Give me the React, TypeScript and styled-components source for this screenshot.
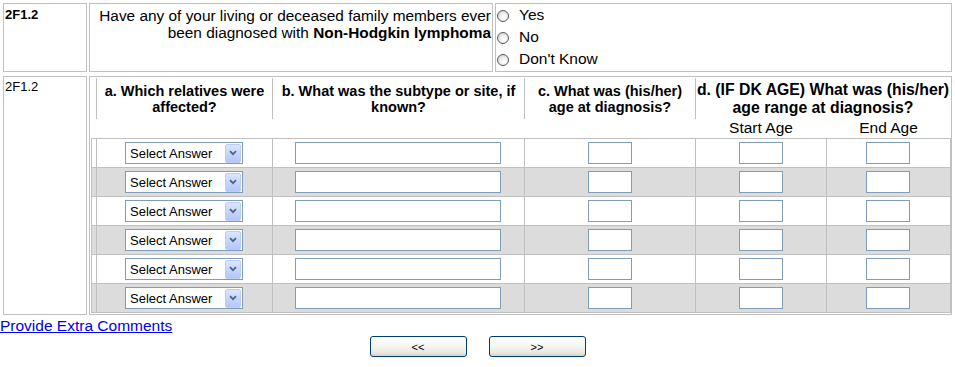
import React from 'react';
import styled, { createGlobalStyle } from 'styled-components';

const GlobalStyle = createGlobalStyle`
  html, body { margin: 0; padding: 0; background: #fff; }
  body { font-family: "Liberation Sans", Arial, sans-serif; color: #000; }
  * { box-sizing: border-box; }
`;

const Page = styled.div`
  width: 955px;
`;

const Row = styled.div<{ $pt: number }>`
  display: grid;
  grid-template-columns: 84px 404px 1fr;
  gap: 2px;
  padding: ${(p) => p.$pt}px 3px 2px;
`;

const Cell = styled.div`
  border: 1px solid #c0c0c0;
  background: #fff;
`;

const IdCell = styled(Cell)<{ $bold?: boolean; $pt: number }>`
  font-size: 13px;
  line-height: 15px;
  font-weight: ${(p) => (p.$bold ? 700 : 400)};
  padding: ${(p) => p.$pt}px 1px 0;
`;

const QuestionCell = styled(Cell)`
  font-size: 15.4px;
  line-height: 17px;
  text-align: right;
  padding: 3px 1px 0 0;
  white-space: nowrap;
`;

const OptionsCell = styled(Cell)`
  display: flex;
  flex-direction: column;
  padding: 0 0 1px 0;
`;

const Option = styled.label`
  display: flex;
  align-items: center;
  height: 22px;
  font-size: 15.5px;
`;

const RadioDot = styled.span`
  width: 12px;
  height: 12px;
  border-radius: 50%;
  border: 1px solid #5a5a5a;
  background: radial-gradient(circle at 60% 65%, #ffffff 0%, #f0f0f0 40%, #c8c8c8 100%);
  margin: 1px 10px 0 1px;
  flex: none;
`;

const TableCell = styled(Cell)`
  grid-column: 2 / span 2;
  padding: 1px 0 1px 1px;
`;

const COLS = '4px 176px 252px 171px 131px 1fr';

const HeaderGrid = styled.div`
  display: grid;
  grid-template-columns: ${COLS};
  grid-template-rows: 41px 19px;
  border-left: 1px solid transparent;
  border-right: 1px solid transparent;
`;

const HeadCell = styled.div<{ $big?: boolean; $span?: number }>`
  grid-column: span ${(p) => p.$span ?? 1};
  border-left: 1px solid #c0c0c0;
  display: flex;
  align-items: center;
  justify-content: center;
  text-align: center;
  font-weight: 700;
  white-space: nowrap;
  font-size: ${(p) => (p.$big ? '15.8px' : '14.5px')};
  line-height: ${(p) => (p.$big ? '18px' : '16px')};
`;

const Blank = styled.div<{ $span?: number }>`
  grid-column: span ${(p) => p.$span ?? 1};
`;

const SubHead = styled.div`
  display: flex;
  justify-content: center;
  font-size: 15.5px;
  line-height: 18px;
  padding-left: 1px;
`;

const DataTable = styled.div`
  border-left: 1px solid #c0c0c0;
  border-right: 1px solid #c0c0c0;
  border-bottom: 1px solid #c0c0c0;
`;

const DataRow = styled.div<{ $alt: boolean }>`
  display: grid;
  grid-template-columns: ${COLS};
  height: 29px;
  border-top: 1px solid #c0c0c0;
  background: ${(p) => (p.$alt ? '#dcdcdc' : '#ffffff')};
`;

const DataCell = styled.div`
  border-left: 1px solid #c0c0c0;
  display: flex;
  align-items: center;
  justify-content: center;
  padding-right: 1px;
`;

const TextBox = styled.input<{ $w: number }>`
  width: ${(p) => p.$w}px;
  height: 22px;
  border: 1px solid #7f9db9;
  background: #fff;
  padding: 0 2px;
  margin: 0;
  font: 13px "Liberation Sans", Arial, sans-serif;
  outline: none;
`;

const SelectBox = styled.div`
  width: 118px;
  height: 22px;
  border: 1px solid #7f9db9;
  background: #fff;
  display: flex;
  align-items: center;
  justify-content: space-between;
  padding: 0 1px 0 4px;
  font-size: 13px;
  white-space: nowrap;
`;

const SelectArrow = styled.span`
  width: 16px;
  height: 19px;
  border: 1px solid #bccdf3;
  border-radius: 2px;
  background: linear-gradient(180deg, #dbe6fd 0%, #c6d6fb 50%, #b3c7f6 100%);
  display: flex;
  align-items: center;
  justify-content: center;
`;

const LinkLine = styled.div`
  font-size: 15.5px;
  line-height: 18px;
  padding-left: 0;
  a { color: #0000ee; text-decoration: underline; }
`;

const ButtonBar = styled.div`
  display: flex;
  justify-content: center;
  gap: 22px;
  margin-top: 1px;
`;

const NavButton = styled.button`
  width: 97px;
  height: 21px;
  border: 1px solid #003c74;
  border-radius: 3px;
  background: linear-gradient(180deg, #ffffff 0%, #f6f6f3 45%, #ebe9e2 80%, #d8d3c8 100%);
  font: 11px "Liberation Sans", Arial, sans-serif;
  color: #000;
  padding: 0;
  margin: 0;
`;

const Chevron = () => (
  <svg width="8" height="6" viewBox="0 0 8 6">
    <polyline points="1,1.2 4,4.2 7,1.2" fill="none" stroke="#4d6185" strokeWidth="1.7" />
  </svg>
);

const options = ['Yes', 'No', "Don't Know"];

export default function App() {
  return (
    <Page>
      <GlobalStyle />
      <Row $pt={3}>
        <IdCell $bold $pt={3}>2F1.2</IdCell>
        <QuestionCell>
          Have any of your living or deceased family members ever
          <br />
          been diagnosed with <b>Non-Hodgkin lymphoma</b>
        </QuestionCell>
        <OptionsCell>
          {options.map((o) => (
            <Option key={o}>
              <RadioDot />
              <span>{o}</span>
            </Option>
          ))}
        </OptionsCell>
      </Row>
      <Row $pt={2}>
        <IdCell $pt={2}>2F1.2</IdCell>
        <TableCell>
          <HeaderGrid>
            <Blank />
            <HeadCell>
              a. Which relatives were
              <br />
              affected?
            </HeadCell>
            <HeadCell>
              b. What was the subtype or site, if
              <br />
              known?
            </HeadCell>
            <HeadCell>
              c. What was (his/her)
              <br />
              age at diagnosis?
            </HeadCell>
            <HeadCell $big $span={2}>
              d. (IF DK AGE) What was (his/her)
              <br />
              age range at diagnosis?
            </HeadCell>
            <Blank $span={4} />
            <SubHead>Start Age</SubHead>
            <SubHead>End Age</SubHead>
          </HeaderGrid>
          <DataTable>
            {[0, 1, 2, 3, 4, 5].map((i) => (
              <DataRow key={i} $alt={i % 2 === 1}>
                <div />
                <DataCell>
                  <SelectBox>
                    <span>Select Answer</span>
                    <SelectArrow>
                      <Chevron />
                    </SelectArrow>
                  </SelectBox>
                </DataCell>
                <DataCell>
                  <TextBox $w={206} type="text" />
                </DataCell>
                <DataCell>
                  <TextBox $w={44} type="text" />
                </DataCell>
                <DataCell>
                  <TextBox $w={44} type="text" />
                </DataCell>
                <DataCell>
                  <TextBox $w={44} type="text" />
                </DataCell>
              </DataRow>
            ))}
          </DataTable>
        </TableCell>
      </Row>
      <LinkLine>
        <a href="#">Provide Extra Comments</a>
      </LinkLine>
      <ButtonBar>
        <NavButton>&lt;&lt;</NavButton>
        <NavButton>&gt;&gt;</NavButton>
      </ButtonBar>
    </Page>
  );
}
